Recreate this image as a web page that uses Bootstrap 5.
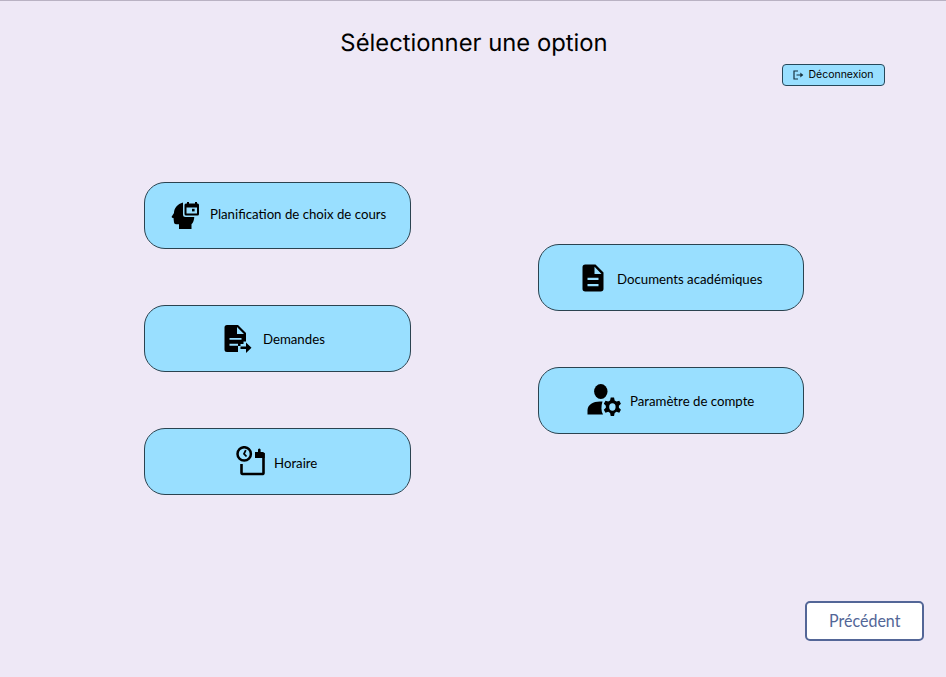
<!DOCTYPE html>
<html lang="fr">
<head>
<meta charset="utf-8">
<meta name="viewport" content="width=device-width, initial-scale=1">
<title>Sélectionner une option</title>
<link href="https://cdn.jsdelivr.net/npm/bootstrap@5.3.0/dist/css/bootstrap.min.css" rel="stylesheet">
<style>
body{background:#eee8f6;font-family:Lato,sans-serif;color:#000;text-rendering:geometricPrecision}
.page{height:677px;border-top:1px solid #b9b2c3;overflow:hidden}
.page-title{font:400 23.800px/30px Inter,sans-serif;margin:26px 0 0;padding:1px 0 0 2px}
.logout{width:103px;height:22px;margin:6px 61px 1px 0;font:400 10.500px/20px Inter,sans-serif;gap:4px;border:1px solid #27485a;border-radius:4px}
.logout,.option{background:#99dfff;color:#000}
.logout:hover,.option:hover{background:#83d4f8;color:#000}
.options{margin:95px 0 0 144px;gap:126.5px}
.stack{gap:56px}
.stack-right{padding-top:61.5px}
.option{width:267px;height:67px;border:1px solid #2b4350;border-radius:21px;font-size:14px;line-height:20px;padding:0;white-space:nowrap}
.stack-right .option{width:266.500px}
.option svg{flex:none}
.option span{transform:scaleX(.944);transform-origin:left}
.pad-plan{padding:0 0 2px 26px;gap:11px}
.pad-plan span{padding-bottom:2px}
.pad-ask{padding-left:79px;gap:11px}
.pad-time{padding:0 0 2px 91px;gap:8px}
.pad-time span{padding-top:4px}
.pad-docs{padding:1px 0 0 43px;gap:12px}
.pad-docs span,.pad-user span{padding-top:2px}
.pad-user{padding-left:48px;gap:9px}
.back{width:119px;height:40px;margin:0 22px 36px 0;background:#fff;border:2px solid #536697;border-radius:5px;color:#536697;font-size:16.500px;padding:1px 0 0}
.back span{display:inline-block;transform:scaleX(.97)}
</style>
</head>
<body>
<div class="page d-flex flex-column">
  <h1 class="page-title text-center">Sélectionner une option</h1>
  <button class="logout btn align-self-end d-flex align-items-center justify-content-center p-0">
    <svg width="11" height="10" viewBox="0 0 11 10" fill="none" stroke="#17323f" stroke-width="1.200"><path d="M5 1H1v8h4M3.500 5h5.700"/><path d="M7.300 2.500 10.300 5 7.300 7.500z" fill="#17323f" stroke="none"/></svg>
    <span>Déconnexion</span>
  </button>
  <main class="options d-flex align-items-start">
    <div class="stack d-flex flex-column">
      <button class="option pad-plan btn d-flex align-items-center">
        <svg width="28" height="28" viewBox="6 6 28 28"><path d="M18 7.500C12.500 9 9 13 9 18L6.600 21.800Q6.500 23 8.500 23L9 27.500Q9.200 29.300 11 29.300H14V34H26.500V29.300Q29 27 29.300 22H20.500Q18 22 18 19.500Z"/><path fill-rule="evenodd" d="M22 7h2v1.500h6V7h2v1.500h.700Q34 8.500 34 10V19Q34 20.500 32.500 20.500H21Q19.500 20.500 19.500 19V10Q19.500 8.500 21 8.500H22zM21.500 12.500V18.500H32V12.500z"/><path d="M27 13.800h2.600v2.600H27z"/></svg>
        <span>Planification de choix de cours</span>
      </button>
      <button class="option pad-ask btn d-flex align-items-center">
        <svg width="28" height="28" viewBox="6.500 7 28 28"><path fill-rule="evenodd" d="M9.500 7H20.500L28.500 15V23.500H26V26H23V28H20.500V34H9.500Q7 34 7 31.500V9.500Q7 7 9.500 7zM19.500 9V16H26.500zM12 20V21.700H24V20zM12 25.800V27.700H20.500V25.800z"/><path d="M23 28.500h5.500V24.500L34 29.800L28.500 35V31H23z"/></svg>
        <span>Demandes</span>
      </button>
      <button class="option pad-time btn d-flex align-items-center">
        <svg width="30" height="30" viewBox="6 6 30 30"><circle cx="14.200" cy="13.900" r="6.700" fill="none" stroke="#000" stroke-width="2.500"/><path d="M15.800 10.200L14 13.800L16.500 16.500" fill="none" stroke="#000" stroke-width="1.800"/><path d="M11.500 24V32.500Q11.500 34 12.500 34H32Q33.500 34 33.500 33V13" fill="none" stroke="#000" stroke-width="2.600"/><path d="M25 12h3V9.500q1.300-2 2.600 0V12h2q2 0 2 2v4H25z"/></svg>
        <span>Horaire</span>
      </button>
    </div>
    <div class="stack stack-right d-flex flex-column">
      <button class="option pad-docs btn d-flex align-items-center">
        <svg width="23" height="28" viewBox="7.500 5.500 23 28"><path fill-rule="evenodd" d="M10.700 6H21L29 14V30.300Q29 33 26.300 33H10.700Q8 33 8 30.300V8.700Q8 6 10.700 6zM20 8.200V15.500H27zM13 19.300V21.500H24V19.300zM13 25.500V27.700H24V25.500z"/></svg>
        <span>Documents académiques</span>
      </button>
      <button class="option pad-user btn d-flex align-items-center">
        <svg width="34" height="34" viewBox="5 5 34 34"><ellipse cx="18.800" cy="13.500" rx="6.700" ry="7.500"/><path d="M5.500 36.500V32C6 26.500 11 23.500 18 23.500H20.500C19 28 19 33 21 36.500z"/><path d="M28.500 19h3.600l.700 3.200 2 1.200 3-.900 1.800 3.200-2.200 2.200v2.200l2.200 2.200-1.800 3.200-3-.900-2 1.200-.700 3.200h-3.600l-.700-3.200-2-1.200-3 .900-1.800-3.200 2.200-2.200v-2.200l-2.200-2.200 1.800-3.200 3 .900 2-1.200z" transform="translate(2.500 2) scale(.92)"/><ellipse cx="30.400" cy="29" rx="3.200" ry="3.700" fill="#99dfff"/></svg>
        <span>Paramètre de compte</span>
      </button>
    </div>
  </main>
  <button class="back btn mt-auto align-self-end"><span>Précédent</span></button>
</div>
<script src="https://cdn.jsdelivr.net/npm/bootstrap@5.3.0/dist/js/bootstrap.bundle.min.js"></script>
</body>
</html>
